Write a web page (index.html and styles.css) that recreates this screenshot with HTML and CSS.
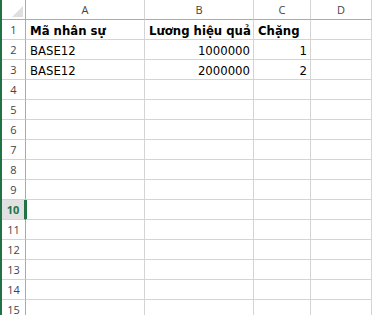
FILE: index.html
```html
<html><head>
<meta charset="utf-8">
<title>Sheet1</title>
<link rel="stylesheet" href="styles.css">
</head>
<body>
<div class="sheet">
  <div class="row head">
    <div class="corner"><span class="tri"></span></div>
    <div class="col">A</div>
    <div class="col">B</div>
    <div class="col">C</div>
    <div class="col">D</div>
  </div>
  <div class="row">
    <div class="num">1</div>
    <div class="cell b">Mã nhân sự</div>
    <div class="cell b">Lương hiệu quả</div>
    <div class="cell b">Chặng</div>
    <div class="cell"></div>
  </div>
  <div class="row">
    <div class="num">2</div>
    <div class="cell">BASE12</div>
    <div class="cell r">1000000</div>
    <div class="cell r">1</div>
    <div class="cell"></div>
  </div>
  <div class="row">
    <div class="num">3</div>
    <div class="cell">BASE12</div>
    <div class="cell r">2000000</div>
    <div class="cell r">2</div>
    <div class="cell"></div>
  </div>
  <div class="row"><div class="num">4</div><div class="cell"></div><div class="cell"></div><div class="cell"></div><div class="cell"></div></div>
  <div class="row"><div class="num">5</div><div class="cell"></div><div class="cell"></div><div class="cell"></div><div class="cell"></div></div>
  <div class="row"><div class="num">6</div><div class="cell"></div><div class="cell"></div><div class="cell"></div><div class="cell"></div></div>
  <div class="row"><div class="num">7</div><div class="cell"></div><div class="cell"></div><div class="cell"></div><div class="cell"></div></div>
  <div class="row"><div class="num">8</div><div class="cell"></div><div class="cell"></div><div class="cell"></div><div class="cell"></div></div>
  <div class="row"><div class="num">9</div><div class="cell"></div><div class="cell"></div><div class="cell"></div><div class="cell"></div></div>
  <div class="row"><div class="num sel">10</div><div class="cell"></div><div class="cell"></div><div class="cell"></div><div class="cell"></div></div>
  <div class="row"><div class="num">11</div><div class="cell"></div><div class="cell"></div><div class="cell"></div><div class="cell"></div></div>
  <div class="row"><div class="num">12</div><div class="cell"></div><div class="cell"></div><div class="cell"></div><div class="cell"></div></div>
  <div class="row"><div class="num">13</div><div class="cell"></div><div class="cell"></div><div class="cell"></div><div class="cell"></div></div>
  <div class="row"><div class="num">14</div><div class="cell"></div><div class="cell"></div><div class="cell"></div><div class="cell"></div></div>
  <div class="row"><div class="num">15</div><div class="cell"></div><div class="cell"></div><div class="cell"></div><div class="cell"></div></div>
</div>
</body></html>
```

FILE: styles.css
```css
body { margin: 0; background: #fff; overflow: hidden; }

.sheet { border-left: 2px solid #217346; width: 370px; }

.row { display: grid; grid-template-columns: 24px 119px 109px 57px 61px; height: 20px; }
.row > div { box-sizing: border-box; height: 20px; border-bottom: 1px solid #d4d4d4; border-right: 1px solid #d4d4d4; }

.head > div { border-bottom-color: #ababab; }
.corner { position: relative; border-right-color: #ababab !important; }
.tri { position: absolute; right: 2px; bottom: 2px; width: 0; height: 0; border-left: 11px solid transparent; border-bottom: 11px solid #dfdfdf; }

.col, .num { font-family: "Open Sans", "Noto Sans", sans-serif; font-size: 11px; color: #444; text-align: center; line-height: 19px; }
.num { border-right-color: #ababab !important; }
.num.sel { background: #e1e1e1; color: #217346; font-weight: bold; border-right: 2px solid #217346 !important; box-shadow: 1px 0 0 #217346; }

.cell { font-family: "Liberation Sans Narrow", "DejaVu Sans Condensed", sans-serif; font-size: 13px; color: #000; padding: 1px 3px 0 4px; line-height: 19px; white-space: nowrap; overflow: visible; }
.cell.b { font-weight: bold; }
.cell.r { text-align: right; }
```
